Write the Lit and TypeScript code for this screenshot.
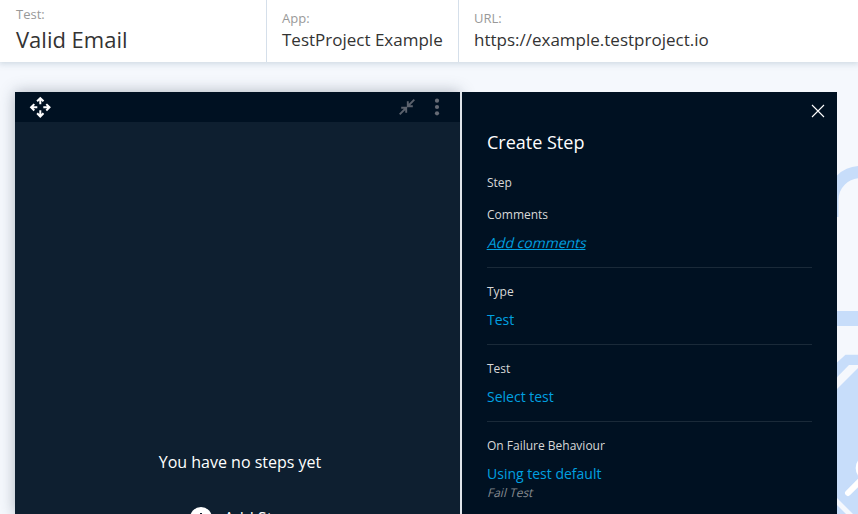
import { LitElement, html, css, svg } from "lit";
import { customElement } from "lit/decorators.js";

const header = [
  { label: "Test:", value: "Valid Email", cls: "main" },
  { label: "App:", value: "TestProject Example", cls: "app" },
  { label: "URL:", value: "https://example.testproject.io", cls: "url" },
];

const fields = [
  { label: "Type", value: "Test", note: "" },
  { label: "Test", value: "Select test", note: "" },
  { label: "On Failure Behaviour", value: "Using test default", note: "Fail Test" },
];

@customElement("step-panel")
class StepPanel extends LitElement {
  static styles = css`
    :host { display: block; box-sizing: border-box; width: 375px; height: 422px; background: #001122; padding: 0 25px; position: relative; overflow: hidden; }
    .close { position: absolute; left: 349px; top: 12px; width: 14px; height: 14px; }
    h2 { margin: 38px 0 0; font-size: 18px; line-height: 25px; font-weight: 400; color: #fff; }
    .label { font-size: 12px; line-height: 16px; color: #d8d8d8; }
    .step { margin-top: 20px; }
    .comments { margin-top: 16px; }
    .value { font-size: 14px; line-height: 20px; margin-top: 10px; color: #00a0e0; }
    .link { width: max-content; text-decoration: underline; text-decoration-skip-ink: none; transform: skewX(-14deg); transform-origin: 0 15px; }
    .field { border-top: 1px solid #1a2a39; margin-top: 14px; padding-top: 16px; }
    .note { width: max-content; font-size: 12px; line-height: 16px; color: #858a8f; margin-top: 1px; transform: skewX(-14deg); transform-origin: 0 12px; }
  `;
  render() {
    return html`
      <svg class="close" viewBox="0 0 14 14"><path d="M1 1L13 13M13 1L1 13" stroke="#fff" stroke-width="1.1" fill="none"/></svg>
      <h2>Create Step</h2>
      <div class="label step">Step</div>
      <div class="label comments">Comments</div>
      <div class="value link">Add comments</div>
      ${fields.map((f) => html`<div class="field">
        <div class="label">${f.label}</div>
        <div class="value">${f.value}</div>
        ${f.note ? html`<div class="note">${f.note}</div>` : ""}
      </div>`)}
    `;
  }
}

@customElement("app-root")
class AppRoot extends LitElement {
  static styles = css`
    :host { display: block; width: 858px; height: 514px; position: relative; overflow: hidden; background: #f5f8fd; font-family: "Open Sans", sans-serif; }
    header { position: relative; display: flex; height: 62px; background: #fff; box-shadow: 0 1px 6px 1px rgba(120, 145, 165, 0.3); color: #333; white-space: nowrap; }
    .item { box-sizing: border-box; padding: 9px 0 0 15px; border-left: 1px solid #d5dfea; }
    .item.main { width: 266px; border-left: 0; padding: 5px 0 0 16px; }
    .item.app { width: 192px; }
    .item.url { flex: 1; }
    .name { font-size: 13px; line-height: 18px; color: #999; }
    .text { font-size: 17px; line-height: 24px; margin-top: 1px; }
    .main .text { font-size: 22px; line-height: 30px; margin-top: 1px; }
    .art { position: absolute; left: 837px; top: 150px; width: 21px; height: 364px; }
    main { position: relative; display: flex; padding: 30px 0 0 15px; }
    .steps { width: 445px; height: 422px; background: #0e1f30; box-shadow: 0 0 14px rgba(40, 55, 75, 0.35); display: flex; flex-direction: column; }
    .bar { flex: none; display: flex; align-items: center; height: 30px; background: #001122; }
    .move { width: 22px; height: 22px; margin-left: 14px; }
    .shrink { width: 16px; height: 16px; margin-left: auto; }
    .dots { width: 6px; height: 18px; margin: 0 20px 0 19px; }
    .empty { flex: none; margin: 328px 0 0 5px; text-align: center; font-size: 16px; line-height: 24px; color: #fff; }
    .add { flex: none; display: flex; align-items: flex-start; margin: 32px 0 0 175px; color: #fff; font-size: 16px; line-height: 24px; white-space: nowrap; }
    .add svg { flex: none; width: 22px; height: 22px; margin: 1px 12px 0 0; }
    .split { width: 2px; background: #dfe4ea; }
  `;
  render() {
    const arrow = (r: number) => svg`<path transform="rotate(${r} 11 11)" d="M11 8V2M7.8 5L11 1.8L14.2 5" fill="none" stroke="#fff" stroke-width="2"/>`;
    return html`
      <svg class="art" viewBox="837 150 21 364">
        <path d="M832.5 217V200A28 28 0 0 1 888.5 200" fill="none" stroke="#c7ddfa" stroke-width="12"/>
        <path d="M837 311H858V326H837Z" fill="#c7ddfa"/>
        <path d="M837 362.5L845.5 354.7H858V514H837Z" fill="#c7ddfa"/>
        <path d="M837 377.3L849 365H858V368L837 389Z" fill="#f5f8fd"/>
        <path d="M837 498L853 514H846L837 505Z" fill="#f5f8fd"/>
        <circle cx="869" cy="468" r="13.3" fill="#fff"/>
        <path d="M848 493L862 479" stroke="#fff" stroke-width="6" stroke-linecap="round"/>
      </svg>
      <header>
        ${header.map((h) => html`<div class="item ${h.cls}"><div class="name">${h.label}</div><div class="text">${h.value}</div></div>`)}
      </header>
      <main>
        <section class="steps">
          <div class="bar">
            <svg class="move" viewBox="-0.3 -0.3 22 22">${[0, 90, 180, 270].map(arrow)}</svg>
            <svg class="shrink" viewBox="0 0 16 16"><path d="M.7 15.3L7 9M2.2 8.8H7.2V13.8M15.3 .7L9 7M8.8 2.2V7.2H13.8" fill="none" stroke="#5b626d" stroke-width="1.9"/></svg>
            <svg class="dots" viewBox="0 0 6 18"><g fill="#666b75"><circle cx="3" cy="2.7" r="2.1"/><circle cx="3" cy="9" r="2.1"/><circle cx="3" cy="15.3" r="2.1"/></g></svg>
          </div>
          <div class="empty">You have no steps yet</div>
          <div class="add"><svg viewBox="0 0 22 22"><circle cx="11" cy="11" r="11" fill="#fff"/><path d="M11 6V16M6 11H16" stroke="#0e1f30" stroke-width="2"/></svg><span>Add Step</span></div>
        </section>
        <div class="split"></div>
        <step-panel></step-panel>
      </main>
    `;
  }
}
